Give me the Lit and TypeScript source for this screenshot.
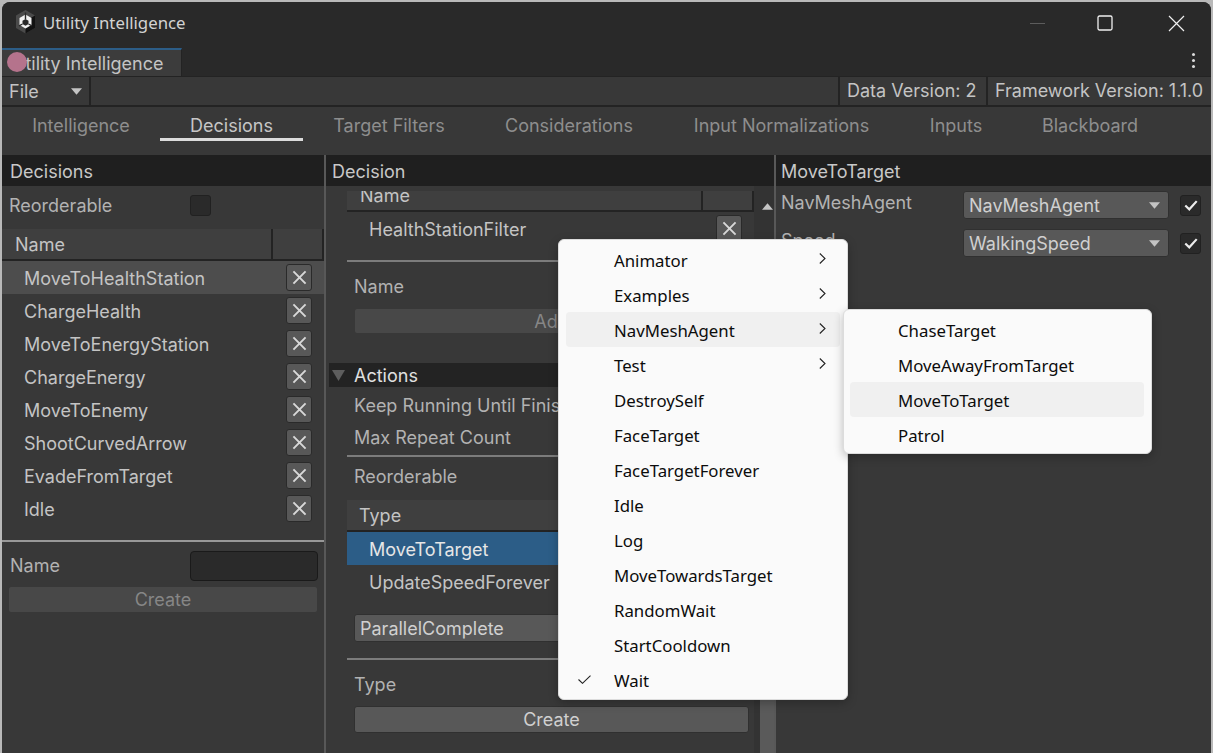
import { LitElement, html, css, svg } from "lit";
import { customElement } from "lit/decorators.js";

const X = svg`<svg class="x" viewBox="0 0 14 14"><path d="M2 2L12 12M12 2L2 12" stroke="#d8d8d8" stroke-width="1.6" fill="none"/></svg>`;
const CHECK = svg`<svg viewBox="0 0 14 14" class="chk"><path d="M2 7.5L5.5 10.8L12 3.6" stroke="#ececec" stroke-width="1.9" fill="none"/></svg>`;
const CHEV = svg`<svg viewBox="0 0 7 11" class="chev"><path d="M0.8 0.5L6 5.5L0.8 10.5" stroke="#222" stroke-width="1.1" fill="none"/></svg>`;
const ARROW = svg`<svg viewBox="0 0 12 7" class="arrow"><path d="M0 0H12L6 7Z" fill="#c4c4c4"/></svg>`;
const TICK = svg`<svg class="tick" viewBox="0 0 13 9"><path d="M0.5 4.5L4.5 8.3L12.5 0.6" stroke="#222" stroke-width="1.1" fill="none"/></svg>`;

const decisions = ["MoveToHealthStation","ChargeHealth","MoveToEnergyStation","ChargeEnergy","MoveToEnemy","ShootCurvedArrow","EvadeFromTarget","Idle"];
const tabs = ["Intelligence","Decisions","Target Filters","Considerations","Input Normalizations","Inputs","Blackboard"];
const tabWidths = [158, 143, 172, 188, 237, 112, 156];
const menu = ["Animator","Examples","NavMeshAgent","Test","DestroySelf","FaceTarget","FaceTargetForever","Idle","Log","MoveTowardsTarget","RandomWait","StartCooldown","Wait"];
const sub = ["ChaseTarget","MoveAwayFromTarget","MoveToTarget","Patrol"];

@customElement("app-root")
export class AppRoot extends LitElement {
  static styles = css`
    :host { display: block; width: 1213px; height: 753px; position: relative; overflow: hidden; background: #b9b9b9; font-family: Inter, "Liberation Sans", sans-serif; font-size: 18px; color: #c4c4c4; }
    .win { position: absolute; inset: 2px 2px 0 2px; display: flex; flex-direction: column; background: #383838; border-top-left-radius: 8px; border-top-right-radius: 8px; overflow: hidden; }
    .title { height: 46px; flex: none; box-sizing: border-box; padding: 0 0 6px 13px; background: #292929; display: flex; align-items: center; gap: 7px; color: #d2d2d2; font-size: 16.8px; font-family: "Noto Sans", sans-serif; }
    .title svg.logo { width: 21px; height: 24px; flex: none; }
    .title .sp { flex: 1; }
    .caps { display: flex; align-items: center; margin-top: 2px; }
    .cap { height: 42px; display: flex; align-items: center; justify-content: center; }
    .cap.max { width: 72px; }
    .cap.close { width: 70px; }
    .min { width: 15px; height: 1px; background: #5c5c5c; margin-right: 24px; }
    .tabrow { height: 28px; flex: none; background: #292929; display: flex; justify-content: space-between; }
    .dtab { width: 180px; box-sizing: border-box; border-top: 2px solid #2c5d87; background: #3c3c3c; padding-left: 10px; line-height: 27px; white-space: nowrap; overflow: hidden; border-right: 1px solid #232323; color: #c4c4c4; }
    .dots { width: 20px; margin-right: 8px; display: flex; flex-direction: column; align-items: center; gap: 3px; padding-top: 5px; }
    .dots i { width: 3px; height: 3px; border-radius: 50%; background: #dcdcdc; }
    .bar { height: 31px; flex: none; display: flex; background: #383838; border-top: 1px solid #232323; border-bottom: 2px solid #232323; box-sizing: border-box; }
    .bar > div { display: flex; align-items: center; padding: 0 7px; border-right: 2px solid #232323; box-sizing: border-box; white-space: nowrap; }
    .bar > .file { width: 89px; justify-content: space-between; padding-top: 1px; }
    .file svg { width: 11px; height: 7px; }
    .bar .fill { flex: 1; padding: 0; }
    .bar .dv { width: 148px; padding-bottom: 2px; }
    .bar .fv { width: 223px; border-right: none; padding-left: 7px; padding-bottom: 2px; letter-spacing: -0.03px; }
    .tabs { height: 48px; flex: none; display: flex; background: #383838; box-sizing: border-box; }
    .tab { flex: none; height: 34px; line-height: 37px; text-align: center; color: #8e8e8e; box-sizing: border-box; white-space: nowrap; }
    .tab.on { color: #c6c6c6; border-bottom: 3px solid #dcdcdc; }
    .panels { flex: 1; display: flex; min-height: 0; }
    .panel { display: flex; flex-direction: column; flex: none; min-height: 0; }
    .left { width: 322px; }
    .mid { width: 450px; border-left: 2px solid #585858; box-sizing: border-box; }
    .right { flex: 1; border-left: 2px solid #585858; }
    .ph { height: 31px; flex: none; background: #1f1f1f; line-height: 33px; padding-left: 8px; color: #c8c8c8; }
    .ph.m { padding-left: 6px; }
    .ph.r { padding-left: 5px; }
    .lbl { line-height: 22px; white-space: nowrap; color: #b2b2b2; }
    .reord { height: 38px; padding: 1px 0 0 7px; margin-bottom: 5px; flex: none; display: flex; align-items: center; box-sizing: border-box; }
    .reord .lbl { width: 181px; }
    .cb { width: 21px; height: 21px; border-radius: 3px; background: #2a2a2a; border: 1px solid #212121; box-sizing: border-box; display: flex; align-items: center; justify-content: center; flex: none; }
    .cb .chk { width: 16px; height: 16px; }
    .lhead { height: 30px; flex: none; background: #3f3f3f; border-bottom: 2px solid #232323; display: flex; line-height: 31px; }
    .lhead .n { flex: 1; padding-left: 13px; border-right: 2px solid #232323; }
    .lhead .c { width: 49px; border-right: 2px solid #232323; }
    .lrow { height: 33px; display: flex; align-items: center; justify-content: space-between; padding: 0 12px 0 22px; flex: none; }
    .lrow span, .mrow span { padding-top: 1px; }
    .lrow.sel { background: #4d4d4d; }
    .xb { width: 26px; height: 27px; box-sizing: border-box; background: #585858; border-radius: 3px; border: 1px solid #2a2a2a; display: flex; align-items: center; justify-content: center; flex: none; }
    .xb .x { width: 17px; height: 17px; }
    .sep { height: 2px; background: #989898; flex: none; }
    .form { padding: 10px 6px 0 6px; display: flex; flex-direction: column; gap: 6px; }
    .namerow { display: flex; align-items: center; height: 28px; padding-left: 2px; }
    .namerow .lbl { width: 180px; }
    .inp { flex: 1; height: 28px; background: #2a2a2a; border: 1px solid #1a1a1a; border-radius: 4px; }
    .btn { height: 27px; border-radius: 3px; background: #585858; border: 1px solid #303030; box-sizing: border-box; text-align: center; line-height: 25px; color: #d0d0d0; flex: none; }
    .btn.dis { background: #484848; color: #868686; border-color: #383838; }
    .btn.add { height: 26px; margin-left: 7px; margin-right: 5px; }
    .btn.cr { margin-left: 7px; margin-right: 5px; }
    .mbody { flex: 1; display: flex; min-height: 0; overflow: hidden; }
    .scroll { flex: 1; min-width: 0; padding: 0 0 0 21px; display: flex; flex-direction: column; overflow: hidden; }
    .sb { width: 20px; flex: none; background: #333; display: flex; flex-direction: column; align-items: flex-end; }
    .sb .up { width: 14px; height: 36px; display: flex; align-items: center; justify-content: center; padding-top: 4px; box-sizing: border-box; }
    .sb .up svg { width: 11px; height: 7px; transform: rotate(180deg); }
    .sb .th { margin-top: auto; width: 14px; height: 200px; background: #5a5a5a; }
    .clip { height: 19px; margin-top: 5px; flex: none; background: #3f3f3f; border-bottom: 2px solid #232323; overflow: hidden; display: flex; }
    .clip span { display: block; margin-top: -6px; padding-left: 13px; line-height: 22px; flex: 1; border-right: 2px solid #232323; color: #c4c4c4; }
    .clip i { width: 49px; border-right: 2px solid #232323; display: block; }
    .mrow { height: 33px; display: flex; align-items: center; justify-content: space-between; padding: 0 12px 0 22px; flex: none; }
    .msep { height: 2px; background: #7c7c7c; flex: none; }
    .fold { height: 24px; flex: none; box-sizing: border-box; padding: 1px 0 0 3px; background: #232323; margin-left: -18px; color: #e0e0e0; display: flex; align-items: center; gap: 9px; }
    .fold svg { width: 13px; height: 11px; }
    .lhead2 { height: 30px; background: #3f3f3f; border-bottom: 2px solid #232323; padding-left: 12px; line-height: 31px; flex: none; color: #c4c4c4; }
    .blue { background: #2c5d87; color: #e6e6e6; }
    .dd { height: 28px; border-radius: 3px; background: #585858; border: 1px solid #303030; box-sizing: border-box; display: flex; align-items: center; justify-content: space-between; padding: 0 8px 0 5px; color: #d0d0d0; flex: none; }
    .dd svg { width: 11px; height: 7px; }
    .dd.pc { margin-left: 7px; margin-right: 5px; }
    .fl { display: flex; align-items: center; flex: none; padding: 1px 0 0 7px; box-sizing: border-box; }
    .h46 { height: 46px; padding-top: 3px; }
    .h36 { height: 36px; }
    .h28 { height: 28px; }
    .h38 { height: 38px; }
    .s4 { height: 4px; flex: none; }
    .s5 { height: 5px; flex: none; }
    .s15 { height: 15px; flex: none; }
    .s16 { height: 16px; flex: none; }
    .s29 { height: 29px; flex: none; }
    .rrow { display: flex; align-items: center; height: 38px; padding: 0 10px 0 5px; flex: none; }
    .rrow .lbl { flex: 1; transform: translateY(-2px); }
    .rrow .dd { width: 206px; margin-right: 11px; }
    .menu { position: absolute; background: #fafafa; border: 1px solid #dcdcdc; border-radius: 6px; box-shadow: 0 3px 10px rgba(0,0,0,.25); padding: 2px 7px; box-sizing: border-box; font-family: "Noto Sans", "Open Sans", sans-serif; font-size: 16.8px; color: #0c0c0c; }
    .m1 { left: 558px; top: 239px; width: 290px; height: 461px; z-index: 2; }
    .m2 { left: 843px; top: 309px; width: 309px; height: 145px; z-index: 3; padding-left: 6px; }
    .mi { height: 35px; display: flex; align-items: center; position: relative; border-radius: 4px; box-sizing: border-box; padding: 1px 0 0 48px; white-space: nowrap; }
    .mi.h { background: #f0f0f0; }
    .chev { position: absolute; right: 14px; top: 11px; width: 7px; height: 11px; }
    .tick { position: absolute; left: 12px; top: 13px; width: 13px; height: 9px; }
    .dot { position: absolute; left: 7px; top: 52px; width: 20px; height: 20px; border-radius: 50%; background: #b5738c; z-index: 4; }
  `;

  render() {
    return html`
      <div class="win">
        <div class="title">
          <svg class="logo" viewBox="0 0 21 24">
            <path d="M10.5 0L20 5.5V18L10.5 23.5L1 18V5.5Z" fill="#4a4a4a"/>
            <path d="M10.5 23.5L20 18V5.5L10.5 11Z" fill="#111"/>
            <path d="M10.5 4.5L16.5 8V15L10.5 18.5L4.5 15V8Z" fill="#f2f2f2"/>
            <path d="M10.5 9L13.5 10.8V14L10.5 15.8L7.5 14V10.8Z" fill="#292929"/>
            <path d="M10.5 2.5V9M4 15.8L7.5 14M17 15.8L13.5 14" stroke="#292929" stroke-width="1.4"/>
          </svg>
          <span>Utility Intelligence</span>
          <span class="sp"></span>
          <div class="caps">
            <div class="min"></div>
            <div class="cap max"><svg width="16" height="16" viewBox="0 0 16 16"><rect x="1" y="1" width="14" height="14" rx="1.5" fill="none" stroke="#f0f0f0" stroke-width="1.3"/></svg></div>
            <div class="cap close"><svg width="17" height="17" viewBox="0 0 17 17"><path d="M1 1L16 16M16 1L1 16" stroke="#f0f0f0" stroke-width="1.2" fill="none"/></svg></div>
          </div>
        </div>
        <div class="tabrow">
          <div class="dtab">Utility Intelligence</div>
          <div class="dots"><i></i><i></i><i></i></div>
        </div>
        <div class="bar">
          <div class="file"><span>File</span>${ARROW}</div>
          <div class="fill"></div>
          <div class="dv">Data Version: 2</div>
          <div class="fv">Framework Version: 1.1.0</div>
        </div>
        <div class="tabs">
          ${tabs.map((t, i) => html`<div class="tab ${i === 1 ? "on" : ""}" style="width:${tabWidths[i]}px">${t}</div>`)}
        </div>
        <div class="panels">
          <div class="panel left">
            <div class="ph">Decisions</div>
            <div class="reord"><span class="lbl">Reorderable</span><div class="cb"></div></div>
            <div class="lhead"><div class="n">Name</div><div class="c"></div></div>
            ${decisions.map((d, i) => html`<div class="lrow ${i === 0 ? "sel" : ""}"><span>${d}</span><div class="xb">${X}</div></div>`)}
            <div class="s15"></div>
            <div class="sep"></div>
            <div class="form">
              <div class="namerow"><span class="lbl">Name</span><div class="inp"></div></div>
              <div class="btn dis">Create</div>
            </div>
          </div>
          <div class="panel mid">
            <div class="ph m">Decision</div>
            <div class="mbody">
              <div class="scroll">
                <div class="clip"><span>Name</span><i></i></div>
                <div class="mrow"><span>HealthStationFilter</span><div class="xb">${X}</div></div>
                <div class="s15"></div>
                <div class="msep"></div>
                <div class="fl lbl h46">Name</div>
                <div class="btn dis add">Add</div>
                <div class="s29"></div>
                <div class="fold"><svg viewBox="0 0 13 11"><path d="M0 0H13L6.5 11Z" fill="#5e5e5e"/></svg><span>Actions</span></div>
                <div class="fl lbl h36">Keep Running Until Finished</div>
                <div class="fl lbl h28">Max Repeat Count</div>
                <div class="s4"></div>
                <div class="msep"></div>
                <div class="fl lbl h38">Reorderable</div>
                <div class="s5"></div>
                <div class="lhead2">Type</div>
                <div class="mrow blue"><span>MoveToTarget</span></div>
                <div class="mrow"><span>UpdateSpeedForever</span></div>
                <div class="s16"></div>
                <div class="dd pc"><span>ParallelComplete</span>${ARROW}</div>
                <div class="s16"></div>
                <div class="msep"></div>
                <div class="fl lbl h46">Type</div>
                <div class="btn cr">Create</div>
              </div>
              <div class="sb"><div class="up">${ARROW}</div><div class="th"></div></div>
            </div>
          </div>
          <div class="panel right">
            <div class="ph r">MoveToTarget</div>
            <div class="rrow"><span class="lbl">NavMeshAgent</span><div class="dd"><span>NavMeshAgent</span>${ARROW}</div><div class="cb">${CHECK}</div></div>
            <div class="rrow"><span class="lbl">Speed</span><div class="dd"><span>WalkingSpeed</span>${ARROW}</div><div class="cb">${CHECK}</div></div>
          </div>
        </div>
      </div>
      <div class="menu m1">
        ${menu.map((m, i) => html`<div class="mi ${i === 2 ? "h" : ""}">${i === 12 ? TICK : ""}${m}${i < 4 ? CHEV : ""}</div>`)}
      </div>
      <div class="menu m2">
        ${sub.map((m, i) => html`<div class="mi ${i === 2 ? "h" : ""}">${m}</div>`)}
      </div>
      <div class="dot"></div>
    `;
  }
}
